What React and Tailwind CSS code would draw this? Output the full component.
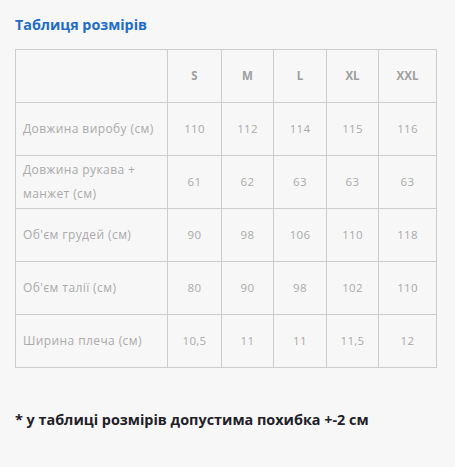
const sizes = ["S", "M", "L", "XL", "XXL"];

const rows = [
  { label: "Довжина виробу (см)", values: ["110", "112", "114", "115", "116"] },
  { label: "Довжина рукава + манжет (см)", values: ["61", "62", "63", "63", "63"] },
  { label: "Об'єм грудей (см)", values: ["90", "98", "106", "110", "118"] },
  { label: "Об'єм талії (см)", values: ["80", "90", "98", "102", "110"] },
  { label: "Ширина плеча (см)", values: ["10,5", "11", "11", "11,5", "12"] },
];

export default function App() {
  return (
    <div
      className="w-[455px] h-[467px] bg-[#f7f7f7] px-[15px] pt-[15px]"
      style={{ fontFamily: '"Open Sans", "Liberation Sans", sans-serif' }}
    >
      {/* Title */}
      <h2 className="text-[14.3px] font-bold text-[#1f6cc7] leading-[20px]">
        Таблиця розмірів
      </h2>

      {/* Size table */}
      <table className="mt-[14px] w-[421px] border-collapse table-fixed">
        <colgroup>
          <col className="w-[152px]" />
          <col className="w-[54px]" />
          <col className="w-[52px]" />
          <col className="w-[53px]" />
          <col className="w-[52px]" />
          <col className="w-[58px]" />
        </colgroup>
        <thead>
          <tr className="h-[53px]">
            <th className="border border-[#cccccc]"></th>
            {sizes.map((s) => (
              <th
                key={s}
                className="border border-[#cccccc] text-[11.5px] font-bold text-[#9e9e9e] text-center"
              >
                {s}
              </th>
            ))}
          </tr>
        </thead>
        <tbody>
          {rows.map((row) => (
            <tr key={row.label} className="h-[53px]">
              <td className="border border-[#cccccc] px-[7px] text-[12px] tracking-[0.4px] leading-[24px] text-[#aaaaaa]">
                {row.label}
              </td>
              {row.values.map((v, i) => (
                <td
                  key={i}
                  className="border border-[#cccccc] text-center text-[11.5px] tracking-[0.3px] text-[#aaaaaa]"
                >
                  {v}
                </td>
              ))}
            </tr>
          ))}
        </tbody>
      </table>

      {/* Note */}
      <p className="mt-[42px] text-[14.4px] font-bold text-[#1f2128] leading-[20px]">
        * у таблиці розмірів допустима похибка +-2 см
      </p>
    </div>
  );
}
